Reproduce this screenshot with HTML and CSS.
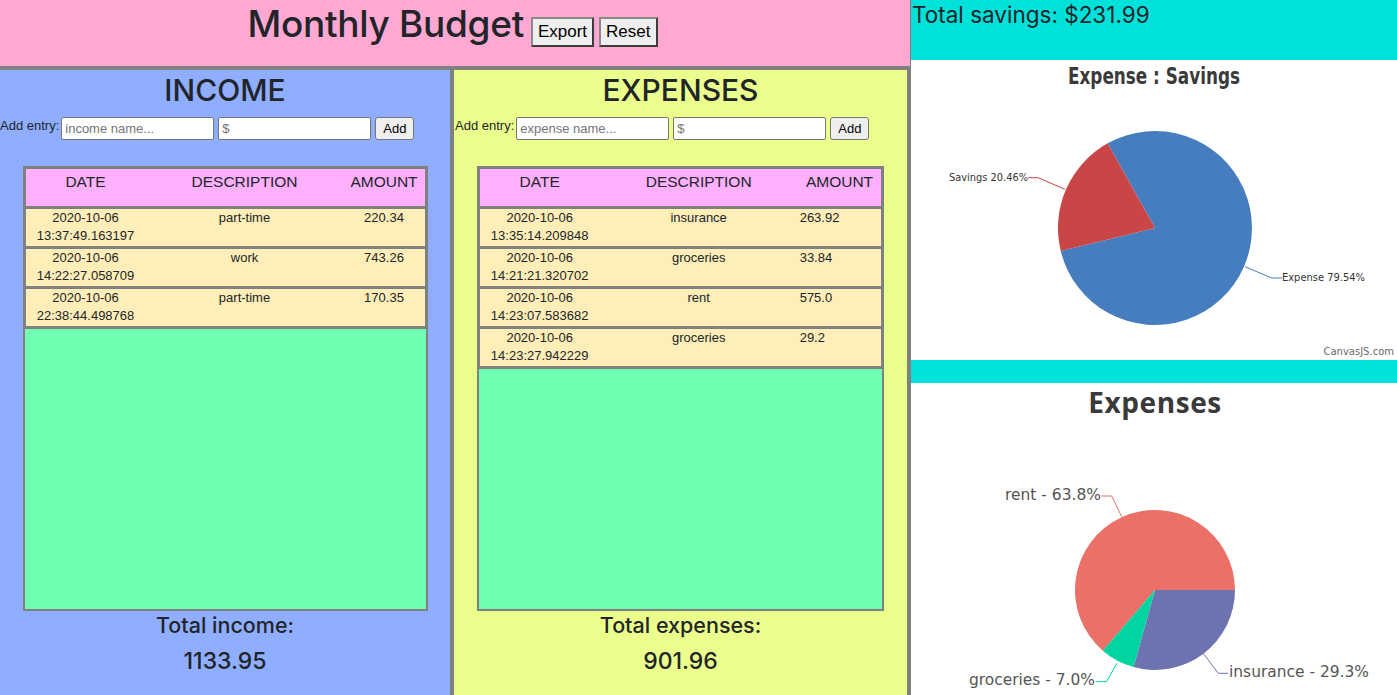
FILE: index.html
```html
<!DOCTYPE html>
<html lang="en">
<head>
<meta charset="utf-8">
<title>Monthly Budget</title>
<link rel="stylesheet" href="styles.css">
</head>
<body>
<div class="page">
  <div class="left">
    <header class="top">
      <h1 class="title">Monthly Budget</h1>
      <button class="big-btn">Export</button>
      <button class="big-btn">Reset</button>
    </header>
    <div class="panels">
      <section class="panel income">
        <h2 class="panel-title">INCOME</h2>
        <div class="add-row">
          <span class="add-label">Add entry:</span>
          <input class="field" type="text" placeholder="income name...">
          <input class="field" type="text" placeholder="$">
          <button class="add-btn">Add</button>
        </div>
        <div class="ledger">
          <div class="row head"><span>DATE</span><span>DESCRIPTION</span><span>AMOUNT</span></div>
          <div class="row entry"><span>2020-10-06<br>13:37:49.163197</span><span>part-time</span><span class="amt">220.34</span></div>
          <div class="row entry"><span>2020-10-06<br>14:22:27.058709</span><span>work</span><span class="amt">743.26</span></div>
          <div class="row entry"><span>2020-10-06<br>22:38:44.498768</span><span>part-time</span><span class="amt">170.35</span></div>
        </div>
        <h4 class="total-label">Total income:</h4>
        <p class="total-value">1133.95</p>
      </section>
      <section class="panel expenses">
        <h2 class="panel-title">EXPENSES</h2>
        <div class="add-row">
          <span class="add-label">Add entry:</span>
          <input class="field" type="text" placeholder="expense name...">
          <input class="field" type="text" placeholder="$">
          <button class="add-btn">Add</button>
        </div>
        <div class="ledger">
          <div class="row head"><span>DATE</span><span>DESCRIPTION</span><span>AMOUNT</span></div>
          <div class="row entry"><span>2020-10-06<br>13:35:14.209848</span><span>insurance</span><span class="amt left">263.92</span></div>
          <div class="row entry"><span>2020-10-06<br>14:21:21.320702</span><span>groceries</span><span class="amt left">33.84</span></div>
          <div class="row entry"><span>2020-10-06<br>14:23:07.583682</span><span>rent</span><span class="amt left">575.0</span></div>
          <div class="row entry"><span>2020-10-06<br>14:23:27.942229</span><span>groceries</span><span class="amt left">29.2</span></div>
        </div>
        <h4 class="total-label">Total expenses:</h4>
        <p class="total-value">901.96</p>
      </section>
    </div>
  </div>
  <aside class="right">
    <div class="savings">Total savings: $231.99</div>
    <div class="chart chart-one">
      <svg width="486" height="300" viewBox="0 0 486 300">
        <text x="243" y="24" class="c1-title" text-anchor="middle" textLength="172" lengthAdjust="spacingAndGlyphs">Expense : Savings</text>
        <path d="M244,168 L196.61,83.37 A97,97 0 1 1 149.75,190.97 Z" fill="#467dbf"/>
        <path d="M244,168 L149.75,190.97 A97,97 0 0 1 196.61,83.37 Z" fill="#c94646"/>
        <polyline points="117,117.7 127,117.7 154,129.3" fill="none" stroke="#c94646" stroke-width="1"/>
        <polyline points="334,206.7 360.7,218 371,218" fill="none" stroke="#467dbf" stroke-width="1"/>
        <text x="38" y="121" class="c1-label" textLength="79" lengthAdjust="spacingAndGlyphs">Savings 20.46%</text>
        <text x="371" y="221" class="c1-label" textLength="83" lengthAdjust="spacingAndGlyphs">Expense 79.54%</text>
        <text x="483" y="295" class="credit" text-anchor="end">CanvasJS.com</text>
      </svg>
    </div>
    <div class="chart chart-two">
      <div class="c2-title">Expenses</div>
      <svg width="486" height="282" viewBox="0 38 486 282">
        <path d="M244,207 L191.83,267.65 A80,80 0 1 1 324,207 Z" fill="#eb7068"/>
        <path d="M244,207 L324,207 A80,80 0 0 1 222.62,284.09 Z" fill="#6d72b0"/>
        <path d="M244,207 L222.62,284.09 A80,80 0 0 1 191.83,267.65 Z" fill="#00d4a0"/>
        <polyline points="190,113 200.7,113 210.7,133.7" fill="none" stroke="#eb7068" stroke-width="1"/>
        <polyline points="292.3,270.3 307.3,290.3 317,290.3" fill="none" stroke="#6d72b0" stroke-width="1"/>
        <polyline points="184.7,298.7 195.7,298.7 205.7,280.3" fill="none" stroke="#00d4a0" stroke-width="1"/>
        <text x="94" y="117" class="c2-label" textLength="96" lengthAdjust="spacingAndGlyphs">rent - 63.8%</text>
        <text x="318" y="294" class="c2-label" textLength="140" lengthAdjust="spacingAndGlyphs">insurance - 29.3%</text>
        <text x="58" y="302" class="c2-label" textLength="126" lengthAdjust="spacingAndGlyphs">groceries - 7.0%</text>
      </svg>
    </div>
  </aside>
</div>
</body>
</html>
```
FILE: styles.css
```css
html, body {
  margin: 0;
  padding: 0;
  height: 100%;
  overflow: hidden;
}
body {
  font-family: "Liberation Sans", Arial, sans-serif;
  color: #212529;
}
.page {
  display: flex;
  height: 695px;
}
.left {
  width: 910px;
  display: flex;
  flex-direction: column;
}
.top {
  height: 66px;
  background: #ffa8d2;
  display: flex;
  align-items: baseline;
  justify-content: center;
  box-sizing: border-box;
}
.title {
  margin: 0 7px 0 0;
  font-family: Inter, "Liberation Sans", sans-serif;
  font-size: 37px;
  font-weight: 500;
  line-height: 48px;
  letter-spacing: -0.3px;
}
.big-btn {
  font-family: "Liberation Sans", Arial, sans-serif;
  font-size: 17px;
  height: 30px;
  padding: 0 5px;
  margin-right: 5px;
  background: #efefef;
  color: #000;
  border: 2px solid;
  border-color: #8a8a8a #3c3c3c #3c3c3c #8a8a8a;
  border-radius: 0;
}
.panels {
  flex: 1;
  display: flex;
  border-top: 4px solid #808080;
  min-height: 0;
}
.panel {
  display: flex;
  flex-direction: column;
  align-items: center;
  overflow: hidden;
}
.income {
  width: 450px;
  background: #8faeff;
  border-right: 4px solid #808080;
}
.expenses {
  flex: 1;
  background: #ebff8c;
  border-right: 3px solid #808080;
}
.panel-title {
  margin: 0;
  font-family: Inter, "Liberation Sans", sans-serif;
  font-size: 30px;
  font-weight: 500;
  line-height: 40px;
}
.add-row {
  align-self: stretch;
  display: flex;
  align-items: flex-start;
  margin-top: 7px;
  height: 23px;
}
.expenses .add-row {
  padding-left: 1px;
}
.add-label {
  font-size: 13px;
  line-height: 18px;
  margin-right: 2px;
}
.field {
  width: 153px;
  height: 23px;
  box-sizing: border-box;
  margin: 0 4px 0 0;
  padding: 1px 3px;
  font-family: "Liberation Sans", Arial, sans-serif;
  font-size: 13px;
  border: 1px solid #767676;
  border-radius: 2px;
  background: #fff;
}
.field::placeholder {
  color: #757575;
}
.add-btn {
  height: 23px;
  box-sizing: border-box;
  padding: 0 7px;
  font-family: "Liberation Sans", Arial, sans-serif;
  font-size: 13px;
  background: #efefef;
  color: #000;
  border: 1px solid #767676;
  border-radius: 3px;
}
.ledger {
  margin-top: 26px;
  width: 90%;
  height: 445px;
  box-sizing: border-box;
  border: 2px solid #808080;
  background: #70ffb0;
  flex-shrink: 0;
}
.row {
  display: grid;
  grid-template-columns: 120px 198px 1fr;
  border: 3px solid #808080;
  margin: -3px -2px 0;
  text-align: center;
}
.head {
  margin-top: -2px;
  background: #ffb0ff;
  font-size: 15.5px;
  line-height: 24px;
  padding-top: 1px;
  height: 36px;
}
.entry {
  background: #ffeeb8;
  font-size: 13px;
  line-height: 18px;
  min-height: 37px;
}
.amt.left {
  text-align: left;
  padding-left: 2px;
}
.total-label {
  margin: 0;
  font-family: Inter, "Liberation Sans", sans-serif;
  font-size: 21.5px;
  font-weight: 500;
  line-height: 29px;
}
.total-value {
  margin: 7px 0 0;
  font-family: Inter, "Liberation Sans", sans-serif;
  font-size: 23px;
  font-weight: 500;
  line-height: 29px;
}
.right {
  flex: 1;
  background: #00e1da;
  border-left: 1px solid #808080;
  display: flex;
  flex-direction: column;
}
.savings {
  height: 60px;
  font-family: Inter, "Liberation Sans", sans-serif;
  font-size: 22.5px;
  line-height: 29px;
  padding-left: 1px;
}
.chart {
  background: #fff;
}
.chart svg {
  display: block;
}
.chart-one {
  height: 300px;
}
.chart-two {
  margin-top: 23px;
  flex: 1;
  overflow: hidden;
}
.c1-title {
  font-family: "DejaVu Sans", sans-serif;
  font-weight: bold;
  font-size: 23px;
  fill: #3a3a3a;
}
.c1-label {
  font-family: "DejaVu Sans Condensed", "DejaVu Sans", sans-serif;
  font-size: 11px;
  fill: #333;
}
.credit {
  font-family: "DejaVu Sans", sans-serif;
  font-size: 10px;
  fill: #6a6a6a;
}
.c2-title {
  height: 38px;
  text-align: center;
  font-family: "Open Sans", sans-serif;
  font-weight: bold;
  font-size: 28px;
  line-height: 39px;
  letter-spacing: 0.6px;
  color: #3a3a3a;
  padding-left: 2px;
}
.c2-label {
  font-family: "DejaVu Sans", sans-serif;
  font-size: 15px;
  fill: #555;
}
```
